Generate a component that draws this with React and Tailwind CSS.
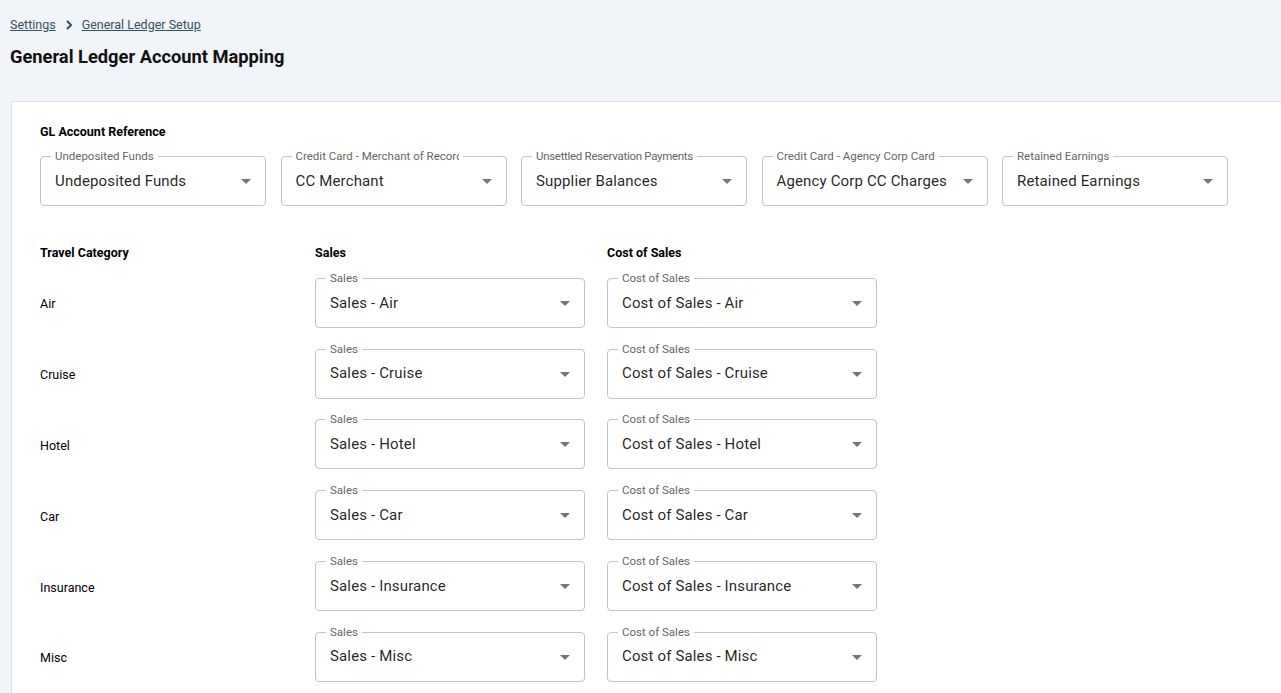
import React from 'react';

const refFields = [
    { label: 'Undeposited Funds', value: 'Undeposited Funds' },
    { label: 'Credit Card - Merchant of Record', value: 'CC Merchant' },
    { label: 'Unsettled Reservation Payments', value: 'Supplier Balances', tight: true },
    { label: 'Credit Card - Agency Corp Card', value: 'Agency Corp CC Charges' },
    { label: 'Retained Earnings', value: 'Retained Earnings' },
];

const categories = ['Air', 'Cruise', 'Hotel', 'Car', 'Insurance', 'Misc'];

const Caret = () => (
    <svg viewBox="0 0 24 24" className="w-6 h-6 absolute right-[7px] top-1/2 -translate-y-1/2" fill="rgba(0,0,0,0.54)">
        <path d="M7 10l5 5 5-5z" />
    </svg>
);

const SelectField = ({ label, value, width, tight }) => (
    <div className={`relative h-[50px] ${width} rounded border border-[#c4c4c4] bg-white`}>
        <span className={`absolute left-[10px] -top-[8px] px-1 bg-white text-[11.5px] leading-[14px] text-[#666] ${tight ? 'tracking-[-0.3px]' : ''}`}>
            <span className="block max-w-[163px] overflow-hidden whitespace-nowrap">{label}</span>
        </span>
        <div className="h-full flex items-center pl-[14px] pr-8 text-[15px] tracking-[0.15px] text-[rgba(0,0,0,0.87)] whitespace-nowrap">
            {value}
        </div>
        <Caret />
    </div>
);

const App = () => {
    return (
        <div className="min-h-[693px] bg-[#f1f4f8] font-['Roboto',sans-serif] text-black overflow-hidden">
            <div className="pl-[10px] pt-[16px]">
                <nav className="flex items-center text-[12.5px] text-[#35505f]">
                    <a href="#" className="underline">Settings</a>
                    <svg viewBox="0 0 24 24" className="w-4 h-4 mx-[5px]" fill="none" stroke="#35505f" strokeWidth="3">
                        <path d="M9 6l6 6-6 6" />
                    </svg>
                    <a href="#" className="underline">General Ledger Setup</a>
                </nav>
                <h1 className="mt-[10px] text-[18.3px] font-bold leading-[24px] text-[#111]">General Ledger Account Mapping</h1>
            </div>

            <div className="ml-[11px] mt-[32px] bg-white border-l border-t border-[#dde2e8] pl-[28px] pt-[22px] pb-10">
                <h2 className="text-[12.5px] font-bold leading-[16px]">GL Account Reference</h2>
                <div className="flex gap-[14.5px] mt-[16px]">
                    {refFields.map((f) => (
                        <SelectField key={f.label} label={f.label} value={f.value} tight={f.tight} width="w-[226px]" />
                    ))}
                </div>

                <div className="flex mt-[39px] text-[12.5px] font-bold leading-[16px]">
                    <div className="w-[275px]">Travel Category</div>
                    <div className="w-[292px]">Sales</div>
                    <div>Cost of Sales</div>
                </div>

                <div className="flex flex-col gap-[20.8px] mt-[17px]">
                    {categories.map((c) => (
                        <div key={c} className="flex items-center">
                            <div className="w-[275px] pt-[4px] text-[12.5px]">{c}</div>
                            <SelectField label="Sales" value={`Sales - ${c}`} width="w-[270px]" />
                            <div className="w-[22px]" />
                            <SelectField label="Cost of Sales" value={`Cost of Sales - ${c}`} width="w-[270px]" />
                        </div>
                    ))}
                </div>
            </div>
        </div>
    );
};

export default App;
